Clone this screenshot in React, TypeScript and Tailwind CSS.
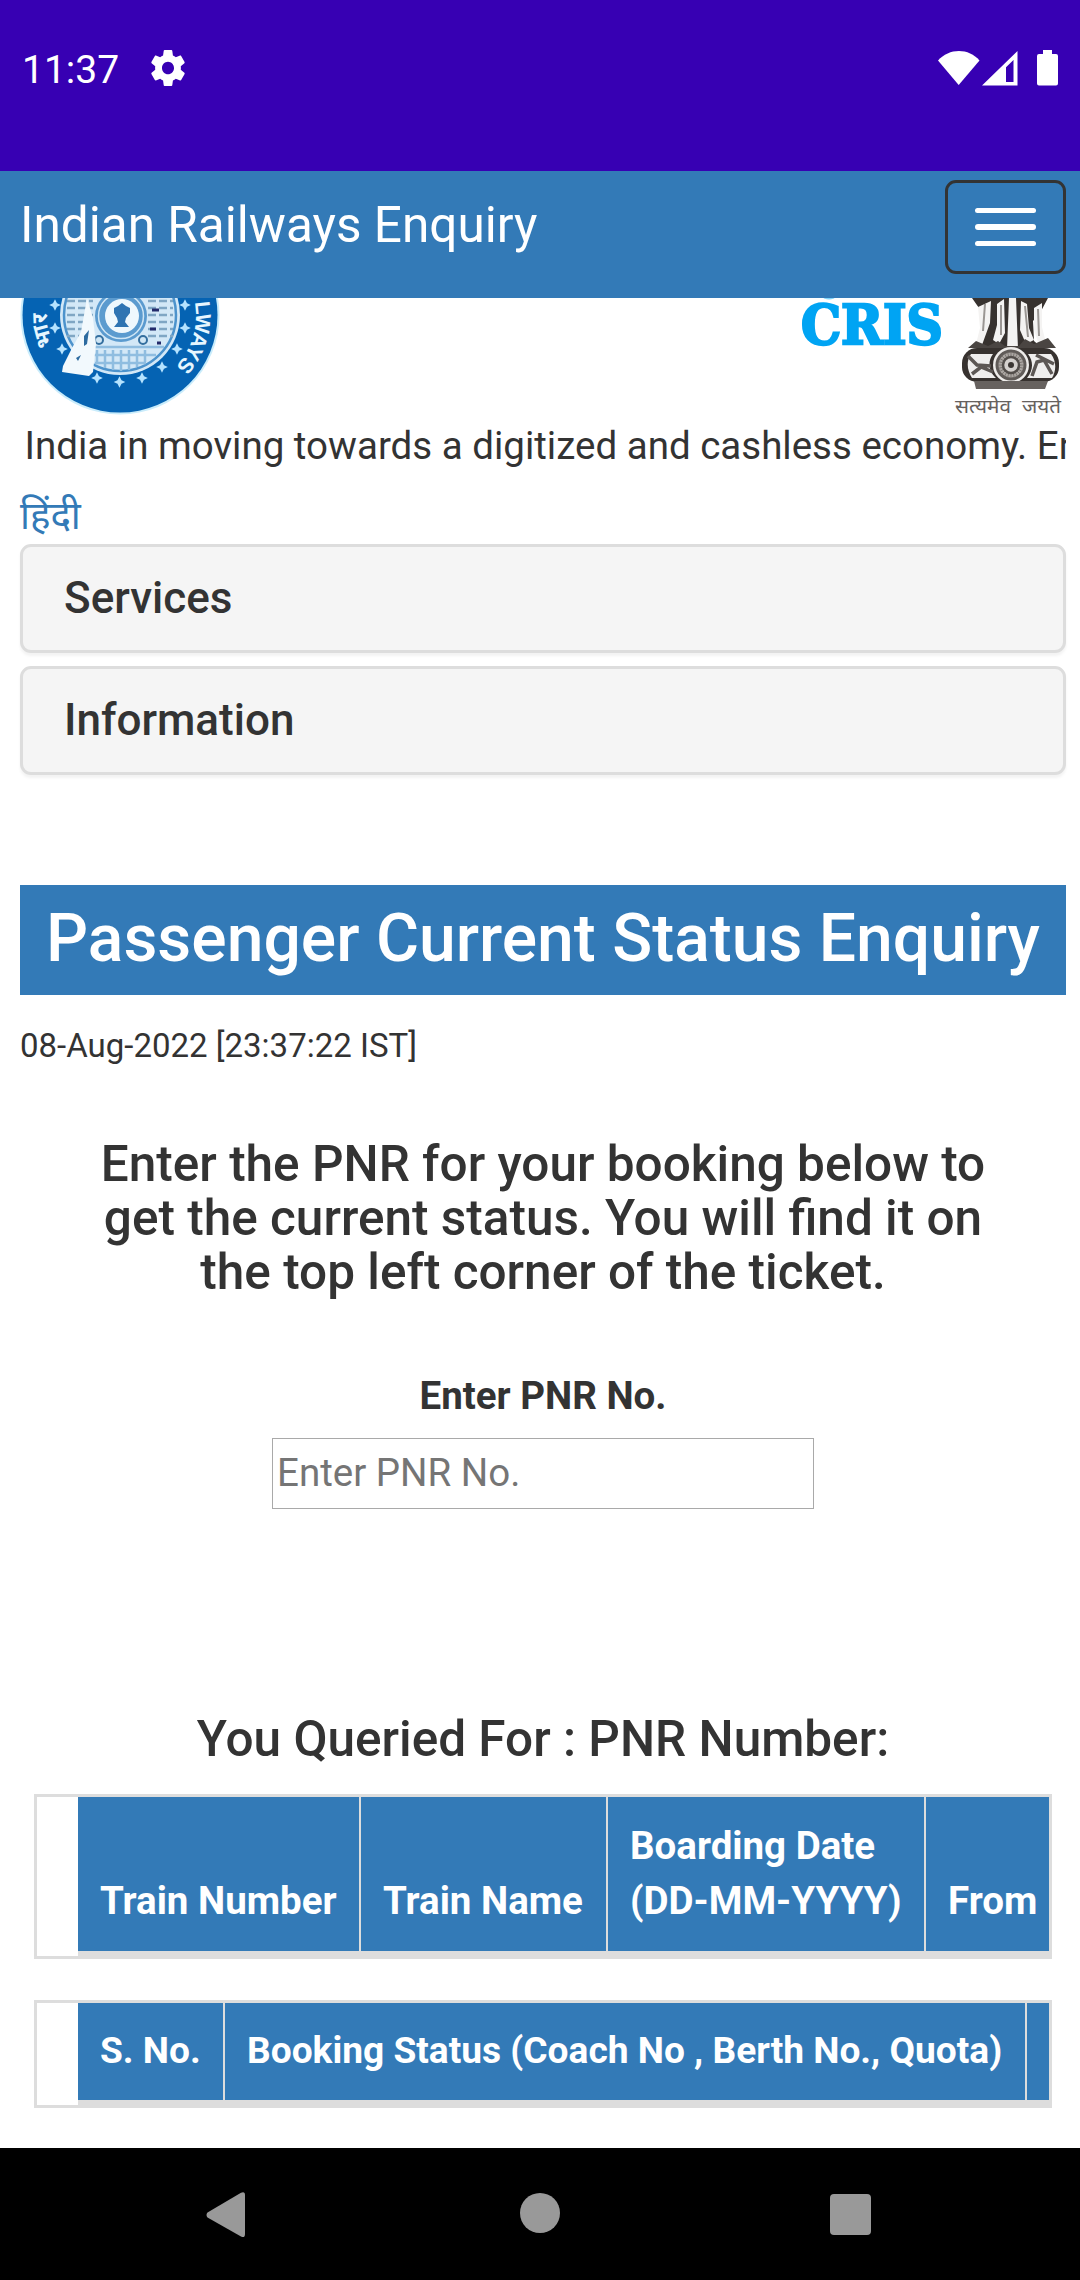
import type { ReactNode } from "react";

const spokes = Array.from({ length: 24 }, (_, i) => i * 15);

function StatusBar() {
  return (
    <div className="h-[171px] bg-[#3700b3] text-white">
      <div className="flex h-[136px] items-center pl-[22px] pr-[21px]">
        <span className="mt-[3px] w-[96px] text-[39px] leading-[136px]">11:37</span>
        <svg className="ml-[33px] h-[36px] w-[34px]" viewBox="2.1 2 19.8 20" preserveAspectRatio="none" fill="currentColor">
          <path
            fillRule="evenodd"
            d="M19.43 12.98c.04-.32.07-.64.07-.98s-.03-.66-.07-.98l2.11-1.65c.19-.15.24-.42.12-.64l-2-3.46c-.12-.22-.39-.3-.61-.22l-2.49 1c-.52-.4-1.08-.73-1.69-.98l-.38-2.65C14.46 2.18 14.25 2 14 2h-4c-.25 0-.46.18-.49.42l-.38 2.65c-.61.25-1.17.59-1.69.98l-2.49-1c-.23-.09-.49 0-.61.22l-2 3.46c-.13.22-.07.49.12.64l2.11 1.65c-.04.32-.07.65-.07.98s.03.66.07.98l-2.11 1.65c-.19.15-.24.42-.12.64l2 3.46c.12.22.39.3.61.22l2.49-1c.52.4 1.08.73 1.69.98l.38 2.65c.03.24.24.42.49.42h4c.25 0 .46-.18.49-.42l.38-2.65c.61-.25 1.17-.59 1.69-.98l2.49 1c.23.09.49 0 .61-.22l2-3.46c.12-.22.07-.49-.12-.64l-2.11-1.65zM12 15.5c-1.93 0-3.5-1.57-3.5-3.5s1.57-3.5 3.5-3.5 3.500 1.570 3.500 3.500-1.570 3.500-3.500 3.500z"
          />
        </svg>
        <svg className="ml-auto h-[36px] w-[122px]" viewBox="0 0 122 36" fill="currentColor">
          <path d="M1 10.500C12 -2.300 32 -2.300 42.500 10.500L21.700 35z" />
          <path fillRule="evenodd" d="M45 35.500L80.500 1V35.500zM69 32H76.500V10L69 17.200z" />
          <path d="M106 0h9v4h4a2 2 0 0 1 2 2v27.500a2 2 0 0 1-2 2h-17a2 2 0 0 1-2-2V6a2 2 0 0 1 2-2h4z" />
        </svg>
      </div>
    </div>
  );
}

function NavBar() {
  return (
    <header className="flex h-[127px] items-start justify-between bg-[#337ab7] pl-[20px] pr-[14px] text-white">
      <span className="text-[49.5px] leading-[108px]">Indian Railways Enquiry</span>
      <button className="mt-[9px] flex h-[94px] w-[121px] flex-col items-center justify-center gap-[11px] rounded-[11px] border-3 border-[#333]">
        <span className="h-[5px] w-[61px] rounded-[3px] bg-white" />
        <span className="h-[6px] w-[61px] rounded-[3px] bg-white" />
        <span className="h-[5px] w-[61px] rounded-[3px] bg-white" />
      </button>
    </header>
  );
}

function RailwayLogo() {
  return (
    <svg className="h-[120px] w-[202px]" viewBox="20 298 202 120">
      <defs>
        <path id="ringRight" d="M120 239A76 76 0 0 1 120 391" />
        <path id="ringLeft" d="M120 388A73 73 0 0 1 120 242" />
      </defs>
      <circle cx="120" cy="315" r="99.500" fill="#c9ecfb" />
      <circle cx="120" cy="315" r="97.500" fill="#0563b3" />
      <circle cx="120" cy="315" r="60" fill="#d3e8f7" />
      <circle cx="120" cy="315" r="56" fill="none" stroke="#4d93cc" strokeWidth="2.500" />
      {[301, 308, 315, 322, 329, 336].map((y) => (
        <path key={y} d={`M67 ${y}h26M148 ${y}h25`} stroke="#7fa6c4" strokeWidth="2.500" strokeDasharray="8 3" />
      ))}
      <path d="M152 310h7M150 329h6M157 343h4" stroke="#232a6b" strokeWidth="3" />
      <path d="M78 347h86M86 355h70M95 363h51M97 350v14M105 350v18M113 350v20M121 350v21M129 350v20M137 350v17M145 350v12" stroke="#8fbde0" strokeWidth="2.500" />
      <circle cx="121" cy="316" r="26" fill="#5b9bcf" />
      <circle cx="121" cy="316" r="22.500" fill="none" stroke="#cfe6f5" strokeWidth="1.500" />
      <circle cx="122" cy="316" r="17" fill="#eff8fd" />
      <path d="M114 308l4-2 4-3 4 3 4 2v5l-4 5-1 4 4 5h-15l4-5-1-4-3-5z" fill="#2f74b2" />
      <circle cx="99" cy="340" r="4" fill="#cfe6f5" stroke="#346f9f" strokeWidth="2" />
      <circle cx="143" cy="340" r="4" fill="#cfe6f5" stroke="#346f9f" strokeWidth="2" />
      <path d="M87 298l6 20 3 26-3 28-4 4-27-4 1-6 9-18 9-16z" fill="#f2f9fd" />
      <path d="M84 336l5-6-2 14-3 2zM76 358l5-3-3 6z" fill="#2d6ba0" />
      {[[55, 305], [55, 328], [62, 349], [97, 378], [119.500, 382], [142, 378], [162, 367], [177, 349], [185, 328], [185, 305]].map(([x, y]) => (
        <path key={`${x}-${y}`} d={`M${x} ${y - 3}l1 2 2 1-2 1-1 2-1-2-2-1 2-1z`} fill="#b5e3ff" stroke="#b5e3ff" strokeWidth="2.500" />
      ))}
      <text fill="#e6f6ff" fontSize="21" fontWeight="700" className="font-['Liberation_Sans']">
        <textPath href="#ringRight" startOffset="106" textLength="70">LWAYS</textPath>
      </text>
      <text fill="#e6f6ff" fontSize="22" fontWeight="700">
        <textPath href="#ringLeft" startOffset="83">भार</textPath>
      </text>
    </svg>
  );
}

function CrisAndEmblem() {
  return (
    <svg className="h-[120px] w-[270px]" viewBox="796 298 270 120">
      <ellipse cx="829" cy="297" rx="6" ry="2.500" fill="#7fd4fa" />
      <text x="801" y="343.500" textLength="142" lengthAdjust="spacingAndGlyphs" fontSize="54" fontWeight="700" fill="#00a4f3" stroke="#00a4f3" strokeWidth="2.500" className="font-['DejaVu_Serif']">
        CRIS
      </text>
      <path d="M972 298h76l-8 15-7 8 1 20 8 7h-64l5-9 1-22-5-9z" fill="#37322f" />
      <path d="M978 307l13-6-1 22-8 22-7 3 5-20z M997 304l7-5 1 34-6 11-6-4 4-15z M1009 298h7l2 51h-11z M1021 301l6 3 2 24 5 12-8 4-6-14z M1034 308l8-5 0 24 5 20-7 1-6-18z" fill="#f4f3f2" />
      <path d="M985 304l-2 27M1001 305v30M1025 306l3 31M1038 309l1 27" stroke="#9a9693" strokeWidth="2" />
      <path d="M976 341l-8 7h88l-8-10-14 6-9-5-6 7h-14l-7-5-10 5z" fill="#4a4542" />
      <rect x="962" y="348" width="97" height="34" rx="15" fill="#37322f" />
      <path d="M971 354h22c-6 8-4 18 3 24h-24c-5-8-6-17-1-24zM1028 354h23c6 8 5 17 1 24h-25c6-7 7-16 1-24z" fill="#efeeed" />
      <path d="M968 356l9 9 14 1M972 374l9-7 12 5M1032 376l5-14 7-2 8 14M1036 355l18 9" stroke="#5c5754" strokeWidth="3.500" fill="none" />
      <circle cx="1011" cy="365" r="18" fill="#eeecea" />
      <circle cx="1011" cy="365" r="14" fill="#aba6a2" stroke="#605b58" strokeWidth="3" />
      {spokes.map((a) => (
        <path key={a} d="M1011 365v-13" transform={`rotate(${a} 1011 365)`} stroke="#77716d" strokeWidth="0.800" />
      ))}
      <circle cx="1011" cy="365" r="8" fill="#d5d1ce" stroke="#534e4b" strokeWidth="2.500" />
      <circle cx="1011" cy="365" r="3" fill="#3b3633" />
      <path d="M974 381h74l-3 8h-69z" fill="#67625f" />
      <g fontSize="19" fill="#66615e">
        <text x="955" y="413" textLength="56" lengthAdjust="spacingAndGlyphs">सत्यमेव</text>
        <text x="1022" y="413" textLength="39" lengthAdjust="spacingAndGlyphs">जयते</text>
      </g>
    </svg>
  );
}

function Panel({ children }: { children: ReactNode }) {
  return (
    <div className="flex h-[109px] items-center rounded-[11px] border-3 border-[#ddd] bg-[#f5f5f5] pb-[2px] pl-[41px] shadow-[0_3px_3px_rgba(0,0,0,0.05)]">
      <h4 className="text-[44px] leading-[48px] font-medium">{children}</h4>
    </div>
  );
}

export default function App() {
  return (
    <div className="flex h-[2280px] w-[1080px] flex-col overflow-hidden bg-white font-[Roboto,'Noto_Sans',sans-serif] text-[38.5px] leading-[55px] text-[#333]">
      <StatusBar />
      <NavBar />
      <main className="flex h-[1850px] flex-col overflow-hidden pl-[20px] pr-[14px]">
        <div className="flex h-[120px] shrink-0 justify-between">
          <RailwayLogo />
          <CrisAndEmblem />
        </div>
        <div className="h-[55px] shrink-0 overflow-hidden pl-[4.500px] whitespace-nowrap">
          India in moving towards a digitized and cashless economy. Enquiry
        </div>
        <a className="mt-[15px] h-[55px] shrink-0 text-[#337ab7]">हिंदी</a>
        <div className="mt-[1px] flex shrink-0 flex-col gap-[13px]">
          <Panel>Services</Panel>
          <Panel>Information</Panel>
        </div>
        <h1 className="mt-[110px] h-[110px] shrink-0 bg-[#337ab7] text-center text-[66px] leading-[108px] font-medium whitespace-nowrap text-white">
          Passenger Current Status Enquiry
        </h1>
        <p className="mt-[27px] text-[33px] leading-[47px]">08-Aug-2022 [23:37:22 IST]</p>
        <h3 className="mt-[68px] text-center text-[49.5px] leading-[54px] font-medium">
          Enter the PNR for your booking below to<br />
          get the current status. You will find it on<br />
          the top left corner of the ticket.
        </h3>
        <label className="mt-[69px] text-center font-bold">Enter PNR No.</label>
        <input
          className="mt-[15px] h-[71px] w-[542px] shrink-0 self-center border border-[#a9a9a9] pb-[2px] pl-[4px] placeholder:text-[#757575]"
          placeholder="Enter PNR No."
        />
        <h3 className="mt-[203px] text-center text-[49.5px] leading-[54px] font-medium">You Queried For : PNR Number:</h3>
        <div className="mt-[28px] ml-[14px] flex h-[165px] w-[1018px] shrink-0 overflow-hidden border-3 border-[#ddd] pl-[41px] font-bold whitespace-nowrap text-white">
          <div className="flex shrink-0 items-end border-b-[5px] border-[#ddd] bg-[#337ab7]">
            <div className="flex h-full w-[283px] items-end border-r-2 border-[#ddd] pb-[23px] pl-[22px]">Train Number</div>
            <div className="flex h-full w-[247px] items-end border-r-2 border-[#ddd] pb-[23px] pl-[22px]">Train Name</div>
            <div className="flex h-full w-[318px] items-end border-r-2 border-[#ddd] pb-[23px] pl-[22px]">
              <span>Boarding Date<br />(DD-MM-YYYY)</span>
            </div>
            <div className="flex h-full w-[160px] items-end pb-[23px] pl-[22px]">From</div>
          </div>
        </div>
        <div className="mt-[41px] ml-[14px] flex h-[108px] w-[1018px] shrink-0 overflow-hidden border-3 border-[#ddd] pl-[41px] text-[37.125px] font-bold whitespace-nowrap text-white">
          <div className="flex shrink-0 border-b-[5px] border-[#ddd] bg-[#337ab7] leading-[95px]">
            <div className="w-[147px] border-r-2 border-[#ddd] pl-[22px]">S. No.</div>
            <div className="w-[802px] border-r-2 border-[#ddd] pl-[22px]">Booking Status (Coach No , Berth No., Quota)</div>
            <div className="w-[60px]" />
          </div>
        </div>
      </main>
      <nav className="flex h-[132px] shrink-0 items-start bg-black pt-[43px] text-[#999]">
        <svg className="ml-[206px] h-[48px] w-[40px]" viewBox="0 0 40 48" fill="currentColor">
          <path d="M1.500 21.500L35 1.700Q39 0 39 4V43Q39 47.500 35 45.500L1.500 26.500Q-0.500 24 1.500 21.500z" />
        </svg>
        <span className="mt-[2px] ml-[274px] h-[40px] w-[40px] rounded-full bg-current" />
        <span className="mt-[3px] ml-[270px] h-[41px] w-[41px] rounded-[4px] bg-current" />
      </nav>
    </div>
  );
}
